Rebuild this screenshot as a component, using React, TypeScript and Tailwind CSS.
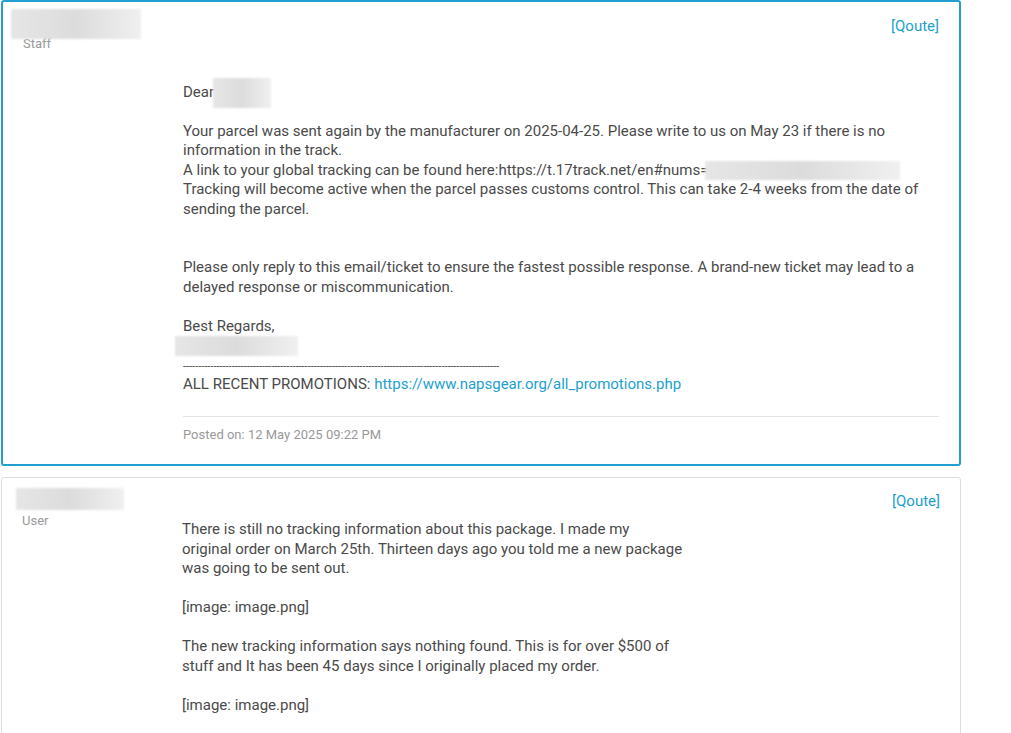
function Redacted({ className }: { className: string }) {
  return (
    <div
      className={`bg-gradient-to-r from-[#e6e6e6] via-[#dcdcdc] to-[#f0f0f0] blur-[1px] ${className}`}
    />
  );
}

const dashes = "-".repeat(104);

export default function App() {
  return (
    <div
      className="w-[1011px] h-[733px] overflow-hidden bg-white text-[15px] leading-[19.5px] text-[#4a4a4a]"
      style={{ fontFamily: "Roboto, 'Liberation Sans', sans-serif" }}
    >
      <div className="w-[960px] ml-[1px] flex flex-col gap-[11px]">
        {/* staff reply */}
        <div className="border-2 border-[#229fcf] rounded-[3px] flex pb-[21px]">
          <div className="w-[180px] shrink-0 pt-[7px] pl-[8px]">
            <Redacted className="w-[130px] h-[30px]" />
            <div className="text-[13px] leading-[14px] text-[#999] pl-[12px] -mt-[2px]">Staff</div>
          </div>
          <div className="flex-1 pr-[20px] pt-[15px]">
            <div className="text-right">
              <a className="text-[#229fcf]">[Qoute]</a>
            </div>
            <div className="mt-[41px]">
              <div className="flex items-center">
                Dear
                <Redacted className="w-[58px] h-[30px] -ml-[1px]" />
              </div>
              <div className="h-[14px]" />
              <p>
                Your parcel was sent again by the manufacturer on 2025-04-25. Please write to us on May 23 if there is no
                information in the track.
                <br />
                A link to your global tracking can be found here:https://t.17track.net/en#nums=
                <Redacted className="inline-block align-top w-[195px] h-[19px] -ml-[3px]" />
                <br />
                Tracking will become active when the parcel passes customs control. This can take 2-4 weeks from the date of
                sending the parcel.
              </p>
              <br />
              <br />
              <p>
                Please only reply to this email/ticket to ensure the fastest possible response. A brand-new ticket may lead to a
                delayed response or miscommunication.
              </p>
              <br />
              <p>Best Regards,</p>
              <Redacted className="w-[123px] h-[20px] -ml-[8px]" />
              <p className="whitespace-nowrap text-[11px] leading-[10px] mt-[6px]">{dashes}</p>
              <p className="mt-[3px]">
                ALL RECENT PROMOTIONS:{" "}
                <a className="text-[#229fcf]">https://www.napsgear.org/all_promotions.php</a>
              </p>
              <div className="border-t border-[#e3e3e3] mt-[21px] pt-[10px] text-[13px] leading-[16px] text-[#999]">
                Posted on: 12 May 2025 09:22 PM
              </div>
            </div>
          </div>
        </div>

        {/* user reply */}
        <div className="border border-[#dddddd] rounded-[3px] flex pb-[20px]">
          <div className="w-[180px] shrink-0 pt-[10px] pl-[14px]">
            <Redacted className="w-[108px] h-[22px]" />
            <div className="text-[13px] leading-[14px] text-[#999] pl-[6px] mt-[4px]">User</div>
          </div>
          <div className="flex-1 pr-[20px] pt-[14px]">
            <div className="text-right">
              <a className="text-[#229fcf]">[Qoute]</a>
            </div>
            <div className="mt-[9px]">
              <p>
                There is still no tracking information about this package. I made my
                <br />
                original order on March 25th. Thirteen days ago you told me a new package
                <br />
                was going to be sent out.
              </p>
              <br />
              <p>[image: image.png]</p>
              <br />
              <p>
                The new tracking information says nothing found. This is for over $500 of
                <br />
                stuff and It has been 45 days since I originally placed my order.
              </p>
              <br />
              <p>[image: image.png]</p>
            </div>
          </div>
        </div>
      </div>
    </div>
  );
}
